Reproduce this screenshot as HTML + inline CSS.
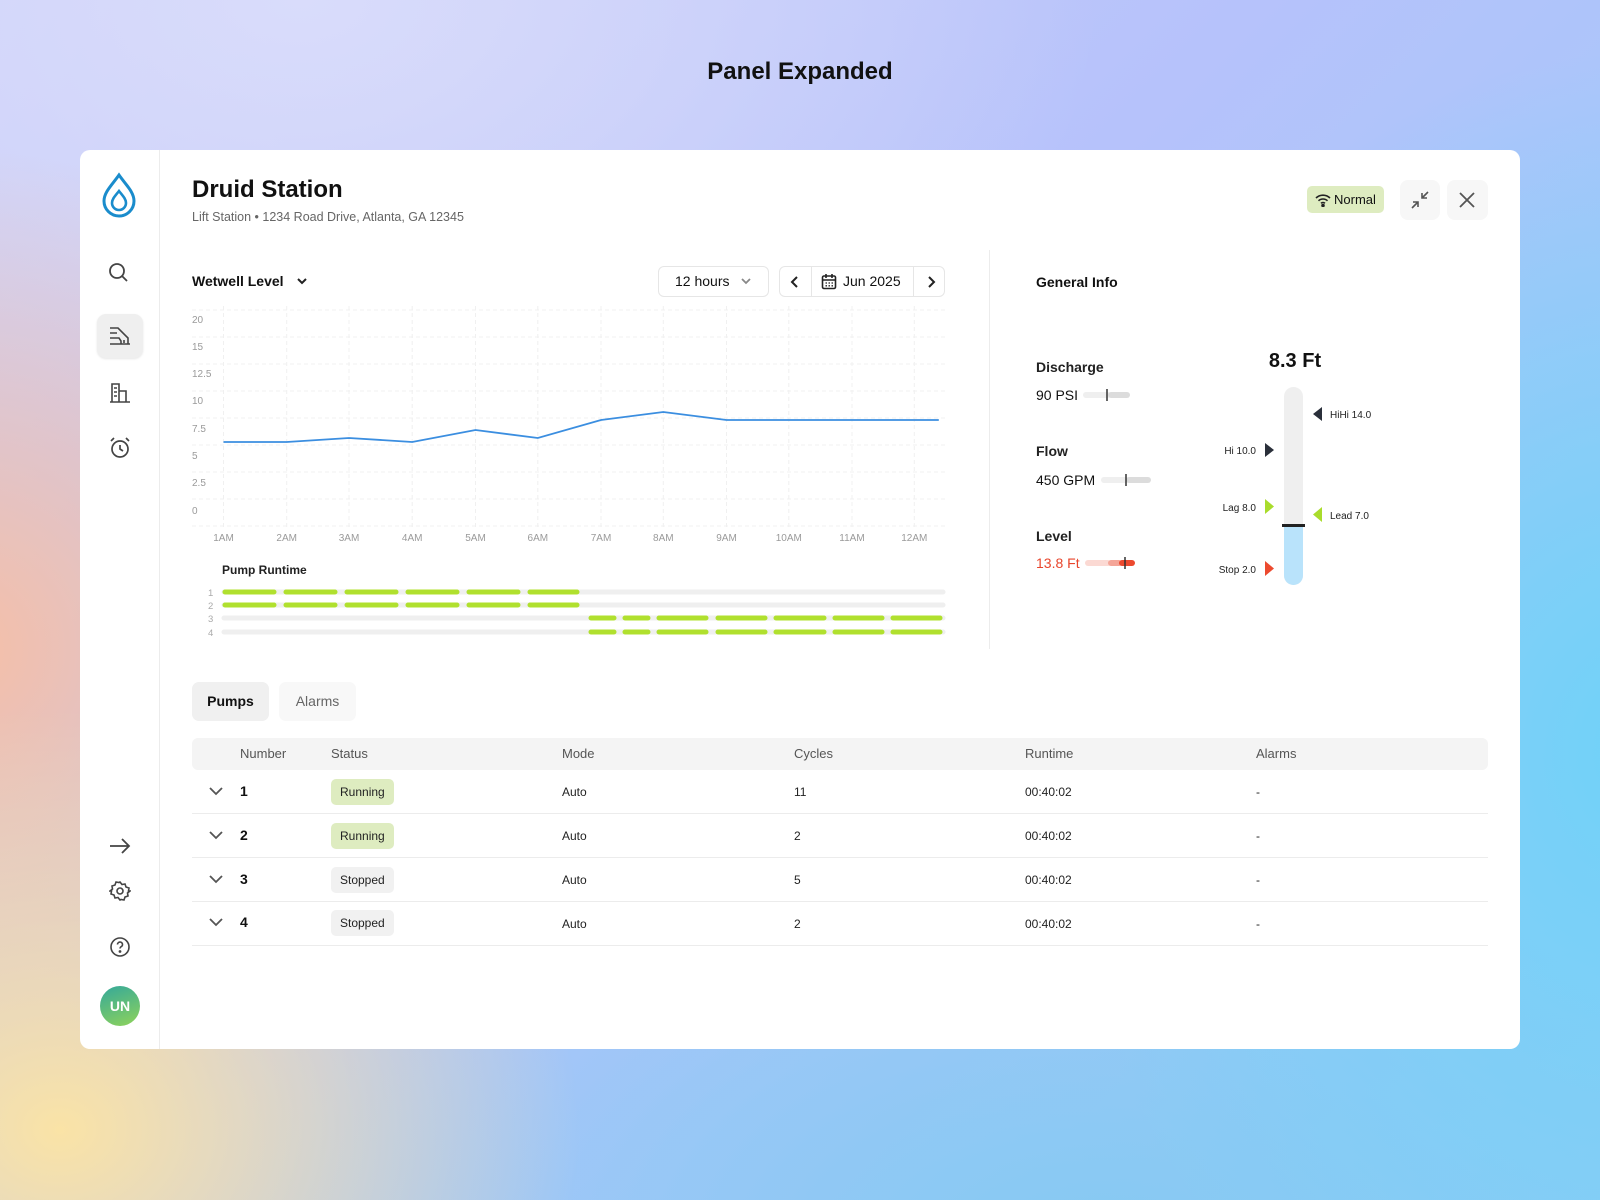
<!DOCTYPE html>
<html><head><meta charset="utf-8"><style>
*{box-sizing:border-box;margin:0;padding:0}
body{width:1600px;height:1200px;position:relative;overflow:hidden;font-family:"Liberation Sans",sans-serif;color:#111;
background:
radial-gradient(ellipse 520px 420px at 60px 1130px,#fae3a6 0%,rgba(250,227,166,0) 100%),
radial-gradient(ellipse 500px 500px at -40px 650px,#f6bfa6 0%,rgba(246,191,166,0) 100%),
radial-gradient(ellipse 600px 700px at 1650px 750px,#6fd2f8 0%,rgba(111,210,248,0) 100%),
radial-gradient(ellipse 900px 500px at 1100px 1250px,#86c9f2 0%,rgba(134,201,242,0) 100%),
radial-gradient(ellipse 800px 500px at 300px 0px,#d9dcfb 0%,rgba(217,220,251,0) 100%),
linear-gradient(135deg,#cdd0f8 0%,#b6c2fb 45%,#93cdf7 100%);}
.a{position:absolute}
h1{position:absolute;left:0;width:1600px;top:58px;text-align:center;font-size:24px;font-weight:700;color:#111}
.card{position:absolute;left:80px;top:150px;width:1440px;height:899px;background:#fff;border-radius:10px;overflow:hidden}
.th{font-size:13px;color:#555}
.td{font-size:12px;color:#222}
.badge{position:absolute;height:26px;border-radius:5px;font-size:12px;line-height:26px;padding:0 9px;color:#222}
.run{background:#deecc0}.stop{background:#f1f1f1}
.line{position:absolute;left:192px;width:1296px;height:1px;background:#ececec}
</style></head><body>
<h1>Panel Expanded</h1>
<div class="card"></div>
<div class="a" style="left:159px;top:150px;width:1px;height:899px;background:#ececec"></div>
<svg class="a" style="left:100px;top:172px" width="38" height="46" viewBox="0 0 38 46"><path d="M19 3 C12 13 4 20 4 29 A15 15 0 0 0 34 29 C34 20 26 13 19 3 Z" fill="none" stroke="#1a8ccc" stroke-width="3"/><path d="M19 19 C15 24 12 27 12 31 A7 7 0 0 0 26 31 C26 27 23 24 19 19 Z" fill="none" stroke="#1a8ccc" stroke-width="2.6"/></svg>
<svg class="a" style="left:108px;top:262px" width="20" height="20" fill="none" stroke="#444" stroke-width="1.8"><circle cx="9" cy="9" r="7"/><path d="M14 14l5 5"/></svg>
<div class="a" style="left:97px;top:314px;width:46px;height:44px;background:#efefef;border-radius:9px;box-shadow:0 1px 2px rgba(0,0,0,.1)"></div>
<svg class="a" style="left:108px;top:325px" width="24" height="22" fill="none" stroke="#444" stroke-width="1.6"><path d="M2 3h8l10 10v6H2M2 8h7M2 13h9l2 3v3M2 19h20M16 18v-3"/></svg>
<svg class="a" style="left:108px;top:382px" width="24" height="22" fill="none" stroke="#444" stroke-width="1.6"><path d="M4 20V2h7v18M11 9h7v11M2 20h20M6 6h3M6 10h3M6 14h3"/></svg>
<svg class="a" style="left:108px;top:436px" width="24" height="24" fill="none" stroke="#444" stroke-width="1.7"><circle cx="12" cy="13" r="8"/><path d="M12 9v4l3 2M3 5l3-3M21 5l-3-3"/></svg>
<svg class="a" style="left:109px;top:837px" width="22" height="18" fill="none" stroke="#444" stroke-width="1.8"><path d="M1 9h19M13 2l7 7-7 7"/></svg>
<svg class="a" style="left:109px;top:880px" width="22" height="22" fill="none" stroke="#444" stroke-width="1.6"><circle cx="11" cy="11" r="3"/><path d="M11 2l2 2.5 3-.5 1 3 3 1-.5 3L21 11l-2.5 2 .5 3-3 1-1 3-3-.5L11 20l-2-2.5-3 .5-1-3-3-1 .5-3L1 11l2.5-2-.5-3 3-1 1-3 3 .5z"/></svg>
<svg class="a" style="left:109px;top:936px" width="22" height="22" fill="none" stroke="#444" stroke-width="1.6"><circle cx="11" cy="11" r="9"/><path d="M8.5 8.5a2.5 2.5 0 1 1 3.5 2.3c-.7.4-1 .9-1 1.7"/><circle cx="11" cy="15.5" r=".6" fill="#444"/></svg>
<div class="a" style="left:100px;top:986px;width:40px;height:40px;border-radius:50%;background:linear-gradient(160deg,#34a89a,#8fd35a);color:#fff;font-weight:700;font-size:14px;line-height:40px;text-align:center">UN</div>
<div class="a" style="left:192px;top:176px;font-size:24px;font-weight:700">Druid Station</div>
<div class="a" style="left:192px;top:210px;font-size:12.5px;color:#666">Lift Station • 1234 Road Drive, Atlanta, GA 12345</div>
<div class="a" style="left:1307px;top:186px;width:77px;height:27px;background:#deecc0;border-radius:5px;font-size:13px;line-height:27px;padding-left:27px">Normal</div>
<svg class="a" style="left:1315px;top:193px" width="16" height="14" fill="none" stroke="#222" stroke-width="1.6"><path d="M1 5a10 10 0 0 1 14 0M3.5 7.8a6.5 6.5 0 0 1 9 0M6 10.3a3 3 0 0 1 4 0"/><circle cx="8" cy="12.5" r="1" fill="#222"/></svg>
<div class="a" style="left:1400px;top:180px;width:40px;height:40px;background:#f7f7f7;border-radius:8px"></div>
<svg class="a" style="left:1410px;top:190px" width="20" height="20" fill="none" stroke="#555" stroke-width="1.6"><path d="M2 18l6-6M3 12h5v5M18 2l-6 6M12 3v5h5"/></svg>
<div class="a" style="left:1447px;top:180px;width:41px;height:40px;background:#f7f7f7;border-radius:8px"></div>
<svg class="a" style="left:1458px;top:191px" width="18" height="18" fill="none" stroke="#555" stroke-width="1.8"><path d="M2 2l14 14M16 2L2 16"/></svg>
<div class="a" style="left:989px;top:250px;width:1px;height:399px;background:#ececec"></div>
<div class="a" style="left:192px;top:273px;font-size:14px;font-weight:700">Wetwell Level</div>
<svg class="a" style="left:296px;top:277px" width="12" height="10" fill="none" stroke="#222" stroke-width="2"><path d="M2 2l4 4 4-4"/></svg>
<div class="a" style="left:658px;top:266px;width:111px;height:31px;border:1px solid #e6e6e6;border-radius:6px;font-size:14px;line-height:29px;padding-left:16px">12 hours</div>
<svg class="a" style="left:740px;top:277px" width="12" height="10" fill="none" stroke="#888" stroke-width="1.8"><path d="M2 2l4 4 4-4"/></svg>
<div class="a" style="left:779px;top:266px;width:166px;height:31px;border:1px solid #e6e6e6;border-radius:6px"></div>
<div class="a" style="left:811px;top:266px;width:1px;height:31px;background:#e6e6e6"></div>
<div class="a" style="left:913px;top:266px;width:1px;height:31px;background:#e6e6e6"></div>
<svg class="a" style="left:790px;top:275px" width="10" height="14" fill="none" stroke="#222" stroke-width="2"><path d="M7 2L2 7l5 5"/></svg>
<svg class="a" style="left:926px;top:275px" width="10" height="14" fill="none" stroke="#222" stroke-width="2"><path d="M3 2l5 5-5 5"/></svg>
<svg class="a" style="left:821px;top:273px" width="16" height="17" fill="none" stroke="#222" stroke-width="1.6"><rect x="1.5" y="3" width="13" height="12.5" rx="1.5"/><path d="M1.5 7h13M5 1v4M11 1v4"/><path d="M4.5 10h1.5M7.5 10h1.5M10.5 10h1.5M4.5 12.8h1.5M7.5 12.8h1.5M10.5 12.8h1.5" stroke-width="1.3"/></svg>
<div class="a" style="left:843px;top:273px;font-size:14px">Jun 2025</div>
<svg class="a" style="left:0;top:0" width="1600" height="1200" font-family="Liberation Sans, sans-serif">
<g stroke="#f0f0f0" stroke-dasharray="4 3" stroke-width="1">
<path d="M192 310H945M192 337H945M192 364H945M192 391H945M192 418H945M192 445H945M192 472H945M192 499H945M192 526H945"/>
<path d="M223.5 306V528M286.7 306V528M349 306V528M412.2 306V528M475.5 306V528M537.8 306V528M601 306V528M663.3 306V528M726.5 306V528M788.8 306V528M852 306V528M914.3 306V528"/>
</g>
<g fill="#9a9a9a" font-size="10">
<text x="192" y="323">20</text><text x="192" y="350">15</text><text x="192" y="377">12.5</text><text x="192" y="404">10</text><text x="192" y="432">7.5</text><text x="192" y="459">5</text><text x="192" y="486">2.5</text><text x="192" y="514">0</text>
</g>
<g fill="#9a9a9a" font-size="10" text-anchor="middle">
<text x="223.5" y="541">1AM</text><text x="286.7" y="541">2AM</text><text x="349" y="541">3AM</text><text x="412.2" y="541">4AM</text><text x="475.5" y="541">5AM</text><text x="537.8" y="541">6AM</text><text x="601" y="541">7AM</text><text x="663.3" y="541">8AM</text><text x="726.5" y="541">9AM</text><text x="788.8" y="541">10AM</text><text x="852" y="541">11AM</text><text x="914.3" y="541">12AM</text>
</g>
<polyline fill="none" stroke="#3b8ee0" stroke-width="1.8" points="223.5,442 286.7,442 349,438 412.2,442 475.5,430 537.8,438 601,420 663.3,412 726.5,420 788.8,420 852,420 914.3,420 938.8,420"/>
<text x="222" y="574" font-size="12" font-weight="700" fill="#222">Pump Runtime</text>
<g fill="#aaa" font-size="9.5"><text x="208" y="596">1</text><text x="208" y="609">2</text><text x="208" y="622">3</text><text x="208" y="636">4</text></g>
<g stroke="#efefef" stroke-width="5" stroke-linecap="round">
<path d="M224 592H943M224 605H943M224 618H943M224 632H943"/></g>
<g stroke="#b0e02e" stroke-width="5" stroke-linecap="round">
<path d="M225 592h49M286 592h49M347 592h49M408 592h49M469 592h49M530 592h47M225 605h49M286 605h49M347 605h49M408 605h49M469 605h49M530 605h47"/>
<path d="M591 618h23M625 618h23M659 618h47M718 618h47M776 618h48M835 618h47M893 618h47M591 632h23M625 632h23M659 632h47M718 632h47M776 632h48M835 632h47M893 632h47"/>
</g>
<rect x="1284" y="387" width="19" height="198" rx="9.5" fill="#efefef"/>
<path d="M1284 526H1303V575.5A9.5 9.5 0 0 1 1284 575.5Z" fill="#b9e3fb"/>
<rect x="1282" y="524" width="23" height="3" fill="#222"/>
<path d="M1322 407v14l-9-7z" fill="#2a2f3a"/>
<path d="M1265 443v14l9-7z" fill="#2a2f3a"/>
<path d="M1265 499v15l9-7.5z" fill="#a9dc2c"/>
<path d="M1322 507v15l-9-7.5z" fill="#a9dc2c"/>
<path d="M1265 561v15l9-7.5z" fill="#ec4a2f"/>
<g font-size="10" fill="#222">
<text x="1330" y="418">HiHi 14.0</text><text x="1256" y="454" text-anchor="end">Hi 10.0</text>
<text x="1256" y="511" text-anchor="end">Lag 8.0</text><text x="1330" y="519">Lead 7.0</text>
<text x="1256" y="573" text-anchor="end">Stop 2.0</text></g>
<g stroke-linecap="round" stroke-width="6">
<path d="M1086 395h22" stroke="#efefef"/><path d="M1111 395h16" stroke="#dcdcdc"/>
<path d="M1104 480h22" stroke="#efefef"/><path d="M1129 480h19" stroke="#dcdcdc"/>
<path d="M1088 563h20" stroke="#fbd9d3"/><path d="M1111 563h8" stroke="#f4a598"/><path d="M1122 563h10" stroke="#ec4a2f"/>
</g>
<path d="M1107 389v12M1126 474v12M1125 557v12" stroke="#333" stroke-width="1.5"/>
</svg>
<div class="a" style="left:1036px;top:274px;font-size:14px;font-weight:700">General Info</div>
<div class="a" style="left:1036px;top:359px;font-size:14px;font-weight:700;color:#222">Discharge</div>
<div class="a" style="left:1036px;top:387px;font-size:14px">90 PSI</div>
<div class="a" style="left:1036px;top:443px;font-size:14px;font-weight:700;color:#222">Flow</div>
<div class="a" style="left:1036px;top:472px;font-size:14px">450 GPM</div>
<div class="a" style="left:1036px;top:528px;font-size:14px;font-weight:700;color:#222">Level</div>
<div class="a" style="left:1036px;top:555px;font-size:14px;color:#e8452c">13.8 Ft</div>
<div class="a" style="left:1245px;top:350px;width:100px;text-align:center;font-size:20px;font-weight:700">8.3 Ft</div>
<div class="a" style="left:192px;top:682px;width:77px;height:39px;background:#f0f0f0;border-radius:7px;font-size:14px;font-weight:600;line-height:39px;text-align:center">Pumps</div>
<div class="a" style="left:279px;top:682px;width:77px;height:39px;background:#f8f8f8;border-radius:7px;font-size:14px;color:#666;line-height:39px;text-align:center">Alarms</div>
<div class="a" style="left:192px;top:738px;width:1296px;height:32px;background:#f4f4f4;border-radius:6px"></div>
<div class="a th" style="left:240px;top:746px">Number</div>
<div class="a th" style="left:331px;top:746px">Status</div>
<div class="a th" style="left:562px;top:746px">Mode</div>
<div class="a th" style="left:794px;top:746px">Cycles</div>
<div class="a th" style="left:1025px;top:746px">Runtime</div>
<div class="a th" style="left:1256px;top:746px">Alarms</div>
<div class="line" style="top:813px"></div><div class="line" style="top:857px"></div><div class="line" style="top:901px"></div><div class="line" style="top:945px"></div>
<svg class="a" style="left:0;top:0" width="400" height="1000" fill="none" stroke="#555" stroke-width="1.8"><path d="M210 788l6 6 6-6M210 832l6 6 6-6M210 876l6 6 6-6M210 919l6 6 6-6"/></svg>
<div class="a" style="left:240px;top:783px;font-size:14px;font-weight:700">1</div>
<div class="a" style="left:240px;top:827px;font-size:14px;font-weight:700">2</div>
<div class="a" style="left:240px;top:871px;font-size:14px;font-weight:700">3</div>
<div class="a" style="left:240px;top:914px;font-size:14px;font-weight:700">4</div>
<div class="badge run" style="left:331px;top:779px">Running</div>
<div class="badge run" style="left:331px;top:823px">Running</div>
<div class="badge stop" style="left:331px;top:867px">Stopped</div>
<div class="badge stop" style="left:331px;top:910px">Stopped</div>
<div class="a td" style="left:562px;top:785px">Auto</div><div class="a td" style="left:794px;top:785px">11</div><div class="a td" style="left:1025px;top:785px">00:40:02</div><div class="a td" style="left:1256px;top:785px">-</div>
<div class="a td" style="left:562px;top:829px">Auto</div><div class="a td" style="left:794px;top:829px">2</div><div class="a td" style="left:1025px;top:829px">00:40:02</div><div class="a td" style="left:1256px;top:829px">-</div>
<div class="a td" style="left:562px;top:873px">Auto</div><div class="a td" style="left:794px;top:873px">5</div><div class="a td" style="left:1025px;top:873px">00:40:02</div><div class="a td" style="left:1256px;top:873px">-</div>
<div class="a td" style="left:562px;top:917px">Auto</div><div class="a td" style="left:794px;top:917px">2</div><div class="a td" style="left:1025px;top:917px">00:40:02</div><div class="a td" style="left:1256px;top:917px">-</div>
</body></html>
